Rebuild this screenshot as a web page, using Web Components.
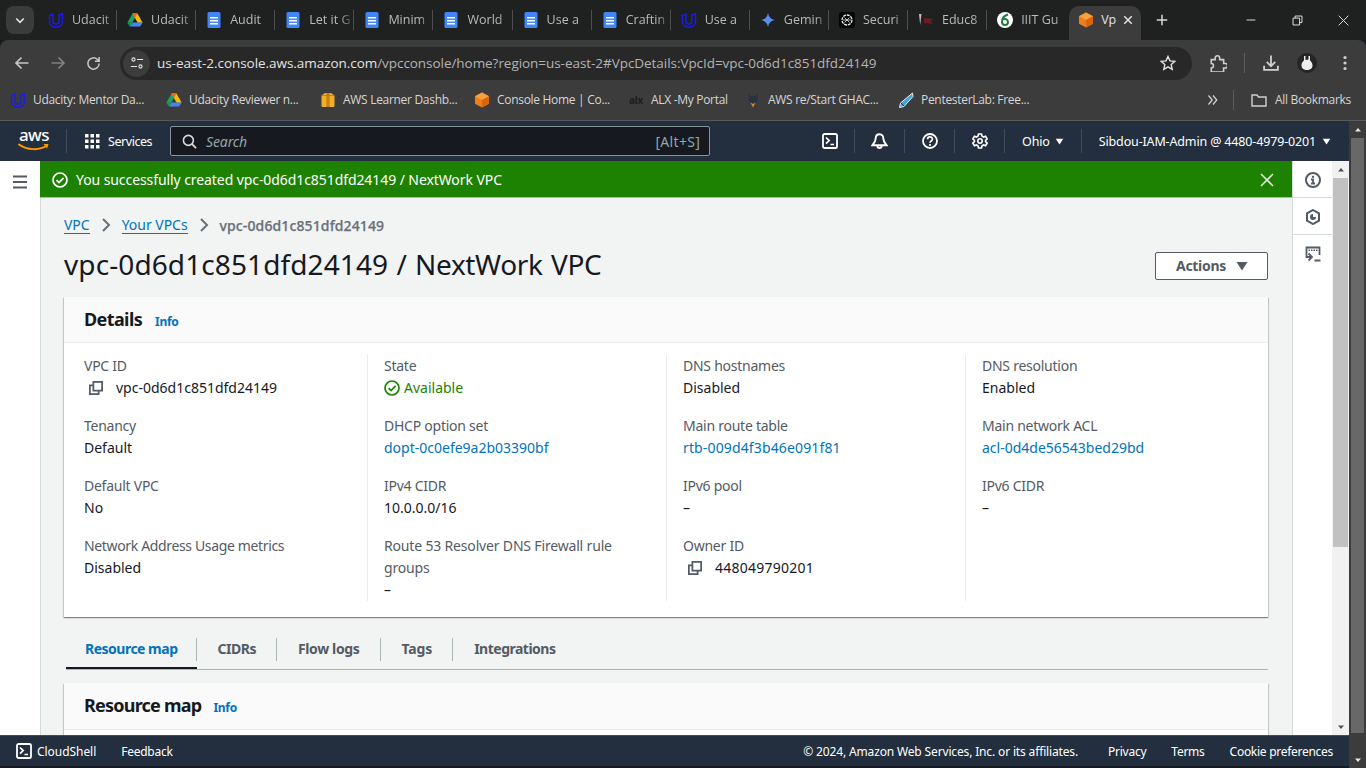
<!DOCTYPE html>
<html lang="en">
<head>
<meta charset="utf-8">
<title>VPC Details</title>
<style>
    html, body { margin: 0; height: 100%; overflow: hidden; background: #16191f; }
    body { display: flex; flex-direction: column; width: 1366px; height: 768px; font-family: "Noto Sans", sans-serif; }
</style>
</head>
<body>
<browser-tabs></browser-tabs>
<browser-toolbar></browser-toolbar>
<browser-bookmarks></browser-bookmarks>
<console-shell></console-shell>

<script>
// Small icon set shared by all elements
const svg = (size, inner, box = 16) => `<svg width="${size}" height="${size}" viewBox="0 0 ${box} ${box}" fill="none" style="display:block;flex:none">${inner}</svg>`;
const line = (d, color = 'currentColor', w = 2) => `<path d="${d}" stroke="${color}" stroke-width="${w}" fill="none"/>`;

const logos = {
    udacity: s => svg(s, line('M1.5 3.5L5 2v7.5C5 11 6.2 12 8 12s3-1 3-2.5V3l3.5-1.5V10c0 3-2.800 5-6.500 5s-6.500-2-6.500-5z', '#1c1ce8', 1.4)),
    drive: s => svg(s, '<path d="M5.5 1.5h5L5.200 10.800H.3z" fill="#1ea362"/><path d="M5.500 1.500h5l5.200 9.300h-5z" fill="#ffba00"/><path d="M3 14.500l2.400-3.900h10.300l-2.600 3.900z" fill="#4285f4"/><path d="M.3 10.800h5L3 14.500z" fill="#0f9d58"/><path d="M5.500 1.500h5L8 6z" fill="#ea4335" opacity=".7"/>'),
    docs: s => svg(s, '<rect x="1.500" width="13" height="16" rx="1.600" fill="#4285f4"/><path d="M4 5h8v1.600H4zM4 8h8v1.600H4zM4 11h8v1.600H4z" fill="#fff"/>'),
    box: s => svg(s, '<path d="M8 .5l7 3.800v7.500L8 15.500 1 11.800V4.300z" fill="#ef7d1a"/><path d="M8 .5l7 3.800L8 8 1 4.300z" fill="#f9a13c"/><path d="M8 8l7-3.700v7.500L8 15.500z" fill="#d9650d"/>'),
    learner: s => svg(s, '<path d="M1.500 3.500L5 1h6l3.500 2.500V14a1 1 0 0 1-1 1h-11a1 1 0 0 1-1-1z" fill="#f0ae2a"/><path d="M6.300 1h3.400v14H6.300z" fill="#c88412"/><path d="M1.500 3.500h13" stroke="#a86d0c" stroke-width=".6"/>'),
    gemini: s => svg(s, '<path d="M8 1c.6 3.900 3.100 6.400 7 7-3.900.6-6.400 3.100-7 7-.6-3.900-3.100-6.400-7-7 3.900-.6 6.400-3.100 7-7z" fill="#5b8def"/>'),
    openai: s => svg(s, '<rect width="16" height="16" rx="3" fill="#050505"/><circle cx="8" cy="8" r="5" stroke="#e8e8e8" stroke-width="1.300" stroke-dasharray="3 .8"/><path d="M5.500 5.500l5 5M10.500 5.500l-5 5M4 8h8" stroke="#cfcfcf" stroke-width=".9"/>'),
    educ: s => svg(s, '<path d="M1 2l1.200 11L3.500 2z" fill="#c9b9b9"/><path d="M6 6l9 1-2.500 2 2.500 3-9-1z" fill="#6e1c1f"/>'),
    iiit: s => svg(s, '<circle cx="8" cy="8" r="8" fill="#fff"/><path d="M11 2.500C7.500 3.500 5 6.500 5 10a3 3 0 1 0 6 0 3 3 0 0 0-4.500-2.500" stroke="#1f7a3d" stroke-width="2"/>'),
    alx: s => svg(s, '<text x="8" y="11.500" text-anchor="middle" font-family="Noto Sans, sans-serif" font-size="10" font-weight="700" fill="#1c1c1c">alx</text>'),
    restart: s => svg(s, '<path d="M3.500 1l2 3h5l2-3v8l-4.500 3-4.500-3z" fill="#2c3340"/><path d="M5.500 10.500L8 15.500l2.500-5L8 12z" fill="#d98a1e"/>'),
    penlab: s => svg(s, '<path d="M14.500 1L15 4.500 6 14.500 1.500 15.500l1-4.500z" fill="#3fa6dd" stroke="#dfeaf2" stroke-width="1"/><path d="M3 11l3 3" stroke="#23323f"/>'),
    avatar: s => svg(s, '<circle cx="10" cy="10" r="10" fill="#252525"/><path d="M4.500 12c0-2.500 2-4 2.500-4.500L7 3h1.500v4l3-.5V3H13v4.500c1.500 1 2.500 3 2.500 5 0 3-2.500 4.500-5.500 4.500s-5.500-1.500-5.500-4.500z" fill="#ededed"/>', 20)
};

const icons = {
    copy: s => svg(s, line('M5 5H1v10h10v-4M5 1h10v10H5z', 'currentColor', 2)),
    check: s => svg(s, '<circle cx="8" cy="8" r="7" stroke="currentColor" stroke-width="1.700"/>' + line('M4.600 8.200L7 10.600l4.600-4.800', 'currentColor', 1.7)),
    shell: s => svg(s, '<rect x="1" y="1" width="14" height="14" rx="1.600" stroke="currentColor" stroke-width="1.800"/>' + line('M4 4.500l3.200 3.100L4 10.700M8.500 11.500H12', 'currentColor', 1.7)),
    bell: s => svg(s, line('M8 1.200c-2.300 0-3.600 1.700-3.600 4 0 2.500-1 4-3 6.300h13.200c-2-2.300-3-3.800-3-6.300 0-2.300-1.300-4-3.600-4zM6 12c0 2.800 4 2.800 4 0', 'currentColor', 1.8)),
    help: s => svg(s, '<circle cx="8" cy="8" r="7" stroke="currentColor" stroke-width="1.800"/>' + line('M5.600 6.200c0-3 4.800-3 4.800 0 0 1.800-2.400 1.800-2.400 3.600', 'currentColor', 1.7) + '<rect x="7.100" y="11" width="1.800" height="1.800" fill="currentColor"/>'),
    gear: s => svg(s, line('M6.500 1h3l.4 2 1.700 1 2-.7 1.500 2.600-1.500 1.400v1.400l1.500 1.400-1.500 2.600-2-.7-1.700 1-.4 2h-3l-.4-2-1.700-1-2 .7-1.500-2.600 1.500-1.400V7.300L.9 5.900l1.500-2.600 2 .7 1.700-1z', 'currentColor', 1.6) + '<circle cx="8" cy="8" r="2.200" stroke="currentColor" stroke-width="1.600"/>'),
    info: s => svg(s, '<circle cx="8" cy="8" r="7" stroke="currentColor" stroke-width="2"/><rect x="6.900" y="3.800" width="2.200" height="2" fill="currentColor"/>' + line('M6 7.500h2v4M6 11.500h4', 'currentColor', 1.8)),
    hex: s => svg(s, line('M8 1l6 3.400v7.200L8 15l-6-3.400V4.400z', 'currentColor', 2) + '<path d="M8 5a3 3 0 1 0 3 3H8z" fill="currentColor"/>'),
    term: s => svg(s, line('M7 11H1.500V1.500h13V9', 'currentColor', 1.8) + '<path d="M3.500 3.500H5V5H3.500zM6 3.500h1.500V5H6zM8.500 3.500H10V5H8.500zM11 3.500h1.500V5H11z" fill="currentColor"/>' + line('M3.500 7.500L7 11l-3.500 3.500M9.500 14.500h6', 'currentColor', 1.8)),
    search: s => svg(s, '<circle cx="6.800" cy="6.800" r="5.300" stroke="currentColor" stroke-width="1.700"/>' + line('M10.700 10.700L15 15', 'currentColor', 1.9)),
    grid: s => svg(s, [1, 6.5, 12].flatMap(y => [1, 6.5, 12].map(x => `<rect x="${x}" y="${y}" width="3.500" height="3.500" fill="currentColor"/>`)).join('')),
    caret: s => svg(s, '<path d="M2.500 4h11L8 12.500z" fill="currentColor"/>'),
    chevron: s => svg(s, line('M5 2l6 6-6 6', 'currentColor', 2)),
    menu: s => svg(s, line('M1 2.500h14M1 8h14M1 13.500h14', 'currentColor', 2))
};

// Base class: every element just declares its template string
class ShadowEl extends HTMLElement {
    constructor() {
        super();
        this.attachShadow({ mode: 'open' });
    }
    connectedCallback() {
        this.shadowRoot.innerHTML = this.template();
    }
}

const TABS = [
    ['udacity', 'Udacit'], ['drive', 'Udacit'], ['docs', 'Audit'], ['docs', 'Let it G'],
    ['docs', 'Minim'], ['docs', 'World'], ['docs', 'Use a'], ['docs', 'Craftin'],
    ['udacity', 'Use a'], ['gemini', 'Gemin'], ['openai', 'Securi'], ['educ', 'Educ8'], ['iiit', 'IIIT Gu']
];

customElements.define('browser-tabs', class extends ShadowEl {
    template() {
        return `<style>
            :host { display: flex; height: 40px; flex: none; background: #1f2020; color: #b9baba; font: 12.5px/16px "Open Sans", sans-serif; box-sizing: border-box; padding-left: 6px; align-items: flex-end; }
            .list { display: flex; height: 34px; align-items: center; }
            .drop { width: 28px; height: 28px; border-radius: 8px; background: #3a3b3b; display: flex; align-items: center; justify-content: center; margin: 6px 4px 6px 0; color: #e3e3e3; align-self: flex-start; }
            .tab { width: 79.1px; box-sizing: border-box; height: 20px; margin-bottom: 6px; display: flex; align-items: center; gap: 8px; padding-left: 10px; border-right: 1px solid #4d4e4e; }
            .tab span { white-space: nowrap; flex: 1; -webkit-mask-image: linear-gradient(90deg, #000 70%, rgba(0,0,0,.1)); mask-image: linear-gradient(90deg, #000 70%, rgba(0,0,0,.1)); }
            .tab.last { border-right: 0; width: 82px; }
            .active { width: 72px; height: 34px; background: #3c3c3c; border-radius: 10px 10px 0 0; display: flex; align-items: center; padding: 0 10px 6px 9px; box-sizing: border-box; gap: 7px; color: #e3e3e3; }
            .active i { margin-left: auto; display: block; }
            .plus { margin: 0 0 0 15px; color: #d8d8d8; align-self: center; }
            .win { margin-left: auto; display: flex; align-self: flex-start; color: #e3e3e3; }
            .win div { width: 46px; height: 40px; display: flex; align-items: center; justify-content: center; }
        </style>
        <div class="drop">${svg(12, line('M3 6l5 5 5-5', 'currentColor', 2.2))}</div>
        <div class="list">
            ${TABS.map(([logo, text], i) => `<div class="tab ${i === TABS.length - 1 ? 'last' : ''}">${logos[logo](16)}<span>${text}</span></div>`).join('')}
            <div class="active">${logos.box(16)}<span>Vp</span><i>${svg(10, line('M2 2l12 12M14 2L2 14', 'currentColor', 2.4))}</i></div>
        </div>
        <div class="plus">${svg(12, line('M8 1v14M1 8h14', 'currentColor', 2))}</div>
        <div class="win">
            <div>${svg(10, line('M1 8h14', 'currentColor', 1.5))}</div>
            <div>${svg(11, line('M1.500 4.500H11v10H1.500zM4.500 4.500v-3h10V11H11', 'currentColor', 1.4))}</div>
            <div>${svg(11, line('M1 1l14 14M15 1L1 15', 'currentColor', 1.4))}</div>
        </div>`;
    }
});

customElements.define('browser-toolbar', class extends ShadowEl {
    template() {
        return `<style>
            :host { display: flex; height: 40px; flex: none; background: #3c3c3c; align-items: center; color: #c7c7c7; box-sizing: border-box; padding: 6px 0 0 14px; border-radius: 8px 8px 0 0; }
            .nav { width: 16px; margin-right: 20px; }
            .dim { color: #808080; }
            .bar { width: 1072px; height: 33px; margin: 0 0 0 -2px; background: #282828; border-radius: 17px; display: flex; align-items: center; box-sizing: border-box; padding: 0 16px 0 3px; }
            .site { width: 27px; height: 27px; border-radius: 50%; background: #3c3c3c; display: flex; align-items: center; justify-content: center; color: #e3e3e3; margin-right: 7px; }
            .url { color: #e3e3e3; font: 13.5px/18px "Open Sans", sans-serif; letter-spacing: -.05px; white-space: nowrap; flex: 1; }
            .url b { font-weight: 400; color: #b4b4b4; }
            .right { display: flex; align-items: center; color: #d0d0d0; margin-left: 17px; }
            .right > * { flex: none; }
            .sep { width: 1px; height: 20px; background: #5c5c5c; margin: 0 17px 0 17px; }
            .me { margin: 0 20px 0 17px; }
        </style>
        <div class="nav">${svg(16, line('M14.500 8H2M7.500 2.500L2 8l5.500 5.500', 'currentColor', 1.7))}</div>
        <div class="nav dim">${svg(16, line('M1.500 8H14M8.500 2.500L14 8l-5.500 5.500', 'currentColor', 1.7))}</div>
        <div class="nav">${svg(15, line('M14 8a6 6 0 1 1-1.800-4.300L14 5.500M14 1v4.500H9.500', 'currentColor', 1.6))}</div>
        <div class="bar">
            <div class="site">${svg(14, '<circle cx="4" cy="4" r="1.800" stroke="currentColor" stroke-width="1.300"/><circle cx="12" cy="12" r="1.800" stroke="currentColor" stroke-width="1.300"/>' + line('M8 4h7M1 12h7', 'currentColor', 1.3))}</div>
            <div class="url">us-east-2.console.aws.amazon.com<b>/vpcconsole/home?region=us-east-2#VpcDetails:VpcId=vpc-0d6d1c851dfd24149</b></div>
            ${svg(16, line('M8 1.500l2 4.400 4.800.5-3.600 3.200 1 4.700L8 11.900l-4.200 2.400 1-4.700L1.200 6.400 6 5.900z', '#e3e3e3', 1.4))}
        </div>
        <div class="right">
            ${svg(18, line('M2 5h3.500V3.500a2 2 0 0 1 4 0V5H13v3.500h1.500a2 2 0 0 1 0 4H13V16H2v-3.500a2 2 0 0 0 0-4z', 'currentColor', 1.4))}
            <div class="sep"></div>
            ${svg(18, line('M8.500 1.500V11M4.500 7.500l4 4 4-4M2 11v4h13v-4', 'currentColor', 1.7), 17)}
            <div class="me">${logos.avatar(20)}</div>
            ${svg(16, '<circle cx="8" cy="2.500" r="1.600" fill="currentColor"/><circle cx="8" cy="8" r="1.600" fill="currentColor"/><circle cx="8" cy="13.500" r="1.600" fill="currentColor"/>')}
        </div>`;
    }
});

// logo, label, left offset of each bookmark
const MARKS = [
    ['udacity', 'Udacity: Mentor Da...', 10], ['drive', 'Udacity Reviewer n...', 166],
    ['learner', 'AWS Learner Dashb...', 320], ['box', 'Console Home | Co...', 474],
    ['alx', 'ALX -My Portal', 628], ['restart', 'AWS re/Start GHAC...', 745], ['penlab', 'PentesterLab: Free...', 898]
];

customElements.define('browser-bookmarks', class extends ShadowEl {
    template() {
        const gaps = MARKS.map(([, , x], i) => i ? x - MARKS[i - 1][2] : x);
        return `<style>
            :host { display: flex; height: 41px; flex: none; background: #3c3c3c; align-items: center; color: #d6d6d6; font: 12px/16px "Open Sans", sans-serif; letter-spacing: -.3px; box-sizing: border-box; border-bottom: 1px solid #5a5a5a; }
            .mark { display: flex; align-items: center; gap: 7px; white-space: nowrap; flex: none; box-sizing: border-box; }
            .more { margin-left: auto; display: flex; align-items: center; }
            .sep { width: 1px; height: 20px; background: #5c5c5c; margin: 0 17px 0 14px; }
            .all { display: flex; align-items: center; gap: 8px; margin-right: 15px; white-space: nowrap; }
        </style>
        <div style="width:${gaps[0]}px;flex:none"></div>
        ${MARKS.map(([logo, text], i) => `<div class="mark" style="width:${gaps[i + 1] || 130}px">${logos[logo](16)}${text}</div>`).join('')}
        <div class="more">
            ${svg(12, line('M2 2l5 6-5 6M8 2l5 6-5 6', '#d0d0d0', 1.7))}
            <div class="sep"></div>
            <div class="all">${svg(16, line('M1 3h5l1.500 2H15v9H1z', '#d0d0d0', 1.4))}All Bookmarks</div>
        </div>`;
    }
});

customElements.define('aws-nav', class extends ShadowEl {
    template() {
        return `<style>
            :host { display: flex; height: 40px; flex: none; background: #232f3e; color: #fff; align-items: center; font-size: 12.5px; letter-spacing: -.15px; box-sizing: border-box; padding-left: 18px; white-space: nowrap; }
            .logo { width: 32px; height: 30px; position: relative; color: #fff; font: 500 17px/18px "Noto Sans", sans-serif; letter-spacing: -.5px; text-align: center; margin-top: -1px; }
            .logo svg { position: absolute; left: 0; top: 17px; }
            .sep { width: 1px; height: 24px; background: #414d5c; flex: none; }
            .services { display: flex; align-items: center; gap: 8px; margin: 0 18px 0 17px; letter-spacing: -.45px; }
            .search { width: 540px; height: 30px; box-sizing: border-box; background: #16191f; border: 1px solid #879596; border-radius: 2px; display: flex; align-items: center; padding: 0 9px 0 11px; gap: 9px; color: #d5dbdb; font-size: 14px; }
            .search em { color: #95a5a6; flex: 1; }
            .search span { color: #95a5a6; letter-spacing: .3px; }
            .tool { width: 50px; display: flex; justify-content: center; border-right: 1px solid #414d5c; height: 24px; align-items: center; box-sizing: border-box; }
            .tools { display: flex; margin-left: 95px; }
            .menu { display: flex; align-items: center; gap: 5px; }
        </style>
        <div class="logo">aws${svg(32, '<path d="M1 1.500c8 6 21 6 28 1" stroke="#ff9900" stroke-width="2" stroke-linecap="round"/><path d="M25.500 1h5L29 5.500z" fill="#ff9900"/>', 32)}</div>
        <div class="sep" style="margin-left:16px"></div>
        <div class="services">${icons.grid(16)}Services</div>
        <div class="search">${icons.search(15)}<em>Search</em><span>[Alt+S]</span></div>
        <div class="tools">
            <div class="tool">${icons.shell(16)}</div>
            <div class="tool">${icons.bell(17)}</div>
            <div class="tool">${icons.help(16)}</div>
            <div class="tool">${icons.gear(16)}</div>
        </div>
        <div class="menu" style="margin-left:17px;gap:4px">Ohio ${icons.caret(11)}</div>
        <div class="sep" style="margin:0 17px 0 16px"></div>
        <div class="menu">Sibdou-IAM-Admin @ 4480-4979-0201 ${icons.caret(11)}</div>`;
    }
});

customElements.define('flash-bar', class extends ShadowEl {
    template() {
        return `<style>
            :host { display: flex; height: 37px; flex: none; background: #1d8102; color: #fff; align-items: center; box-sizing: border-box; border-bottom: 1px solid #aab7b8; padding: 1px 17px 0 12px; font-size: 14px; letter-spacing: -.08px; gap: 8px; }
            span { flex: 1; }
        </style>
        ${icons.check(16)}<span><slot></slot></span>${svg(16, line('M2 2l12 12M14 2L2 14', '#dfe9dc', 1.6))}`;
    }
});

customElements.define('bread-crumbs', class extends ShadowEl {
    template() {
        return `<style>
            :host { display: flex; align-items: center; height: 22px; font-size: 14px; color: #687078; white-space: nowrap; gap: 8px; }
            a { color: #0073bb; border-bottom: 1px solid #0073bb; line-height: 17px; letter-spacing: -.03px; }
            b { font-weight: 500; color: #687078; letter-spacing: .12px; -webkit-text-stroke: .25px #687078; }
        </style>
        <a>VPC</a>${icons.chevron(16)}<a>Your VPCs</a>${icons.chevron(16)}<b>vpc-0d6d1c851dfd24149</b>`;
    }
});

customElements.define('kv-item', class extends ShadowEl {
    template() {
        return `<style>
            :host { display: block; font-size: 14px; line-height: 22px; color: #16191f; height: 60px; }
            .k { color: #545b64; letter-spacing: ${this.getAttribute('ls') || '-.25px'}; }
            :host([tall]) { height: auto; }
            .v { display: flex; align-items: center; }
            :host([link]) .v { color: #0073bb; }
            :host([copy]) .v { gap: 13px; padding-left: 5px; }
            :host([ok]) .v { color: #1d8102; gap: 4px; }
            .ic { color: #545b64; display: ${this.hasAttribute('copy') ? 'block' : 'none'}; }
            .ok { display: ${this.hasAttribute('ok') ? 'block' : 'none'}; color: #1d8102; }
        </style>
        <div class="k">${this.getAttribute('label')}</div>
        <div class="v"><span class="ic">${icons.copy(14)}</span><span class="ok">${icons.check(16)}</span><slot></slot></div>`;
    }
});

customElements.define('kv-column', class extends ShadowEl {
    template() {
        return `<style>
            :host { display: block; box-sizing: border-box; padding: 0 20px 0 16px; border-right: 1px solid #eaeded; }
            :host(:first-child) { padding-left: 0; }
            :host(:last-child) { border-right: 0; padding-right: 0; }
        </style><slot></slot>`;
    }
});

customElements.define('aws-card', class extends ShadowEl {
    template() {
        return `<style>
            :host { display: block; background: #fff; box-shadow: 0 1px 1px 0 rgba(0,28,36,.3), 1px 1px 1px 0 rgba(0,28,36,.15), -1px 1px 1px 0 rgba(0,28,36,.15); }
            header { background: #fafafa; border-bottom: 1px solid #eaeded; height: 46px; box-sizing: border-box; display: flex; align-items: center; padding: 0 20px 2px; gap: 13px; }
            h2 { margin: 0; font-size: 18px; font-weight: 700; line-height: 22px; color: #16191f; letter-spacing: -.6px; }
            a { color: #0073bb; font-size: 12px; font-weight: 700; margin-top: 5px; letter-spacing: -.3px; }
            .body { display: grid; grid-template-columns: 284px 299px 299px 1fr; padding: 12px 20px 16px; }
            :host([empty]) header { height: 47px; padding-bottom: 3px; gap: 12px; }
            :host([empty]) h2 { letter-spacing: -.77px; }
            :host([empty]) .body { display: block; padding: 0; height: 40px; }
        </style>
        <header><h2>${this.getAttribute('heading')}</h2><a>Info</a></header>
        <div class="body"><slot></slot></div>`;
    }
});

customElements.define('vpc-tabs', class extends ShadowEl {
    template() {
        return `<style>
            :host { display: flex; height: 35px; box-sizing: border-box; border-bottom: 1px solid #aab7b8; font-size: 14px; font-weight: 700; letter-spacing: -.5px; color: #545b64; margin-left: 2px; white-space: nowrap; }
            div { height: 23px; margin-top: 3px; padding: 0 20px 0 21px; border-right: 1px solid #aab7b8; line-height: 22px; }
            div.on { color: #0073bb; padding: 0 19px 0 19px; position: relative; height: 31px; border-right: 0; box-sizing: border-box; border-bottom: 2px solid #16191f; }
            div.on::before { content: ""; position: absolute; right: 0; top: 0; width: 1px; height: 23px; background: #aab7b8; }
            div:last-child { border-right: 0; }
        </style>
        <div class="on">Resource map</div><div>CIDRs</div><div style="letter-spacing:-.35px">Flow logs</div><div style="letter-spacing:-.15px">Tags</div><div>Integrations</div>`;
    }
});

customElements.define('scroll-track', class extends ShadowEl {
    template() {
        const dark = this.hasAttribute('dark');
        return `<style>
            :host { display: flex; flex-direction: column; flex: none; width: 17px; background: ${dark ? '#3c3c3c' : '#f1f1f1'}; }
            .arrow { height: 17px; display: flex; align-items: center; justify-content: center; flex: none; color: ${dark ? '#e8e8e8' : '#505050'}; }
            .thumb { width: ${dark ? 13 : 15}px; margin: 0 auto; height: ${this.getAttribute('thumb')}px; background: ${dark ? '#686868' : '#c1c1c1'}; flex: none; }
            i { flex: 1; }
        </style>
        <div class="arrow">${svg(8, '<path d="M2 11h12L8 4z" fill="currentColor"/>')}</div>
        <div class="thumb"></div><i></i>
        <div class="arrow">${svg(8, '<path d="M2 5h12l-6 7z" fill="currentColor"/>')}</div>`;
    }
});

customElements.define('tool-rail', class extends ShadowEl {
    template() {
        return `<style>
            :host { display: block; width: 40px; flex: none; background: #fff; border-left: 1px solid #d5dbdb; box-sizing: border-box; color: #545b64; }
            div { height: 37px; box-sizing: border-box; padding-top: 1px; display: flex; align-items: center; justify-content: center; border-bottom: 1px solid #d5dbdb; }
            div:last-child { border-bottom: 0; }
        </style>
        <div>${icons.info(16)}</div><div>${icons.hex(16)}</div><div>${icons.term(16)}</div>`;
    }
});

customElements.define('vpc-page', class extends ShadowEl {
    template() {
        return `<style>
            :host { display: block; flex: 1; min-width: 0; background: #f2f3f3; overflow: hidden; box-shadow: inset 1px 0 0 #d5dbdb; }
            .main { padding: 16px 24px 0; }
            h1 { margin: 0; font-size: 28px; font-weight: 400; line-height: 36px; color: #16191f; white-space: nowrap; flex: 1; letter-spacing: .1px; }
            h1 span { letter-spacing: -.35px; word-spacing: 1.5px; }
            .head { display: flex; align-items: center; margin: 10px 0 15px; }
            button { width: 113px; height: 28px; font: 700 14px "Noto Sans", sans-serif; letter-spacing: -.3px; color: #545b64; background: #fff; border: 1px solid #545b64; border-radius: 2px; display: flex; align-items: center; gap: 8px; margin-top: 4px; padding: 0 0 1px 20px; }
            vpc-tabs { margin-top: 18px; }
            .map { margin-top: 13px; }
        </style>
        <flash-bar>You successfully created vpc-0d6d1c851dfd24149 / NextWork VPC</flash-bar>
        <div class="main">
            <bread-crumbs></bread-crumbs>
            <div class="head"><h1>vpc-0d6d1c851dfd24149<span> / NextWork VPC</span></h1><button>Actions ${icons.caret(16)}</button></div>
            <aws-card heading="Details">
                <kv-column>
                    <kv-item label="VPC ID" copy>vpc-0d6d1c851dfd24149</kv-item>
                    <kv-item label="Tenancy">Default</kv-item>
                    <kv-item label="Default VPC">No</kv-item>
                    <kv-item label="Network Address Usage metrics" ls="-.35px" tall>Disabled</kv-item>
                </kv-column>
                <kv-column>
                    <kv-item label="State" ok>Available</kv-item>
                    <kv-item label="DHCP option set" link>dopt-0c0efe9a2b03390bf</kv-item>
                    <kv-item label="IPv4 CIDR">10.0.0.0/16</kv-item>
                    <kv-item label="Route 53 Resolver DNS Firewall rule groups" ls="-.17px" tall>–</kv-item>
                </kv-column>
                <kv-column>
                    <kv-item label="DNS hostnames">Disabled</kv-item>
                    <kv-item label="Main route table" link><span style="letter-spacing:.14px">rtb-009d4f3b46e091f81</span></kv-item>
                    <kv-item label="IPv6 pool">–</kv-item>
                    <kv-item label="Owner ID" copy tall><span style="letter-spacing:.25px">448049790201</span></kv-item>
                </kv-column>
                <kv-column>
                    <kv-item label="DNS resolution">Enabled</kv-item>
                    <kv-item label="Main network ACL" link>acl-0d4de56543bed29bd</kv-item>
                    <kv-item label="IPv6 CIDR">–</kv-item>
                </kv-column>
            </aws-card>
            <vpc-tabs></vpc-tabs>
            <aws-card class="map" heading="Resource map" empty></aws-card>
        </div>`;
    }
});

customElements.define('aws-footer', class extends ShadowEl {
    template() {
        return `<style>
            :host { display: flex; height: 31px; flex: none; background: #232f3e; color: #fff; align-items: center; font-size: 12px; letter-spacing: -.25px; box-sizing: border-box; border-top: 1px solid #414d5c; padding: 0 16px; white-space: nowrap; }
            .shell { display: flex; align-items: center; gap: 5px; margin-right: 25px; letter-spacing: -.05px; }
            .right { margin-left: auto; display: flex; gap: 25px; }
            .right span:first-child { margin-right: 5px; letter-spacing: -.15px; }
            .right span:last-child { letter-spacing: -.28px; }
        </style>
        <div class="shell">${icons.shell(16)}CloudShell</div><div>Feedback</div>
        <div class="right"><span>© 2024, Amazon Web Services, Inc. or its affiliates.</span><span>Privacy</span><span>Terms</span><span>Cookie preferences</span></div>`;
    }
});

customElements.define('console-shell', class extends ShadowEl {
    template() {
        return `<style>
            :host { display: flex; flex: 1; min-height: 0; }
            .col { flex: 1; min-width: 0; display: flex; flex-direction: column; font-family: "Noto Sans", sans-serif; margin-bottom: 2px; }
            .content { flex: 1; min-height: 0; display: flex; background: #fff; }
            .side { width: 40px; flex: none; display: flex; justify-content: center; padding-top: 13px; box-sizing: border-box; color: #545b64; }
        </style>
        <div class="col">
            <aws-nav></aws-nav>
            <div class="content">
                <div class="side">${icons.menu(16)}</div>
                <vpc-page></vpc-page>
                <tool-rail></tool-rail>
                <scroll-track thumb="369"></scroll-track>
            </div>
            <aws-footer></aws-footer>
        </div>
        <scroll-track dark thumb="595"></scroll-track>`;
    }
});
</script>
</body>
</html>
